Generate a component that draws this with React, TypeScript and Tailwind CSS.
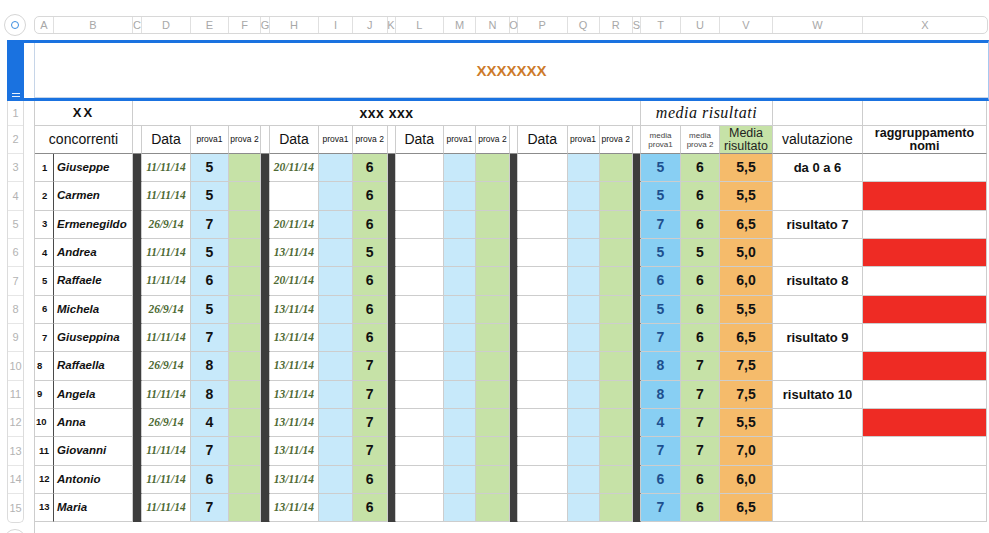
const COLS =
  "grid grid-cols-[19px_79px_9px_49px_38px_32px_9px_49px_34px_34.5px_8px_48.5px_32px_34px_8px_49.5px_32px_33.5px_8px_40px_39px_53px_90px_124px]";

const letters = "ABCDEFGHIJKLMNOPQRSTUVWX".split("");

type Row = {
  n: number;
  pl: string;
  name: string;
  d1: string;
  e: string;
  d2: string;
  j: string;
  t: string;
  u: string;
  v: string;
  w: string;
  red: boolean;
};

const rows: Row[] = [
  { n: 1, pl: "pl-[7px]", name: "Giuseppe", d1: "11/11/14", e: "5", d2: "20/11/14", j: "6", t: "5", u: "6", v: "5,5", w: "da 0 a 6", red: false },
  { n: 2, pl: "pl-[7px]", name: "Carmen", d1: "11/11/14", e: "5", d2: "", j: "6", t: "5", u: "6", v: "5,5", w: "", red: true },
  { n: 3, pl: "pl-[7px]", name: "Ermenegildo", d1: "26/9/14", e: "7", d2: "20/11/14", j: "6", t: "7", u: "6", v: "6,5", w: "risultato 7", red: false },
  { n: 4, pl: "pl-[7px]", name: "Andrea", d1: "11/11/14", e: "5", d2: "13/11/14", j: "5", t: "5", u: "5", v: "5,0", w: "", red: true },
  { n: 5, pl: "pl-[7px]", name: "Raffaele", d1: "11/11/14", e: "6", d2: "20/11/14", j: "6", t: "6", u: "6", v: "6,0", w: "risultato 8", red: false },
  { n: 6, pl: "pl-[7px]", name: "Michela", d1: "26/9/14", e: "5", d2: "13/11/14", j: "6", t: "5", u: "6", v: "5,5", w: "", red: true },
  { n: 7, pl: "pl-[7px]", name: "Giuseppina", d1: "11/11/14", e: "7", d2: "13/11/14", j: "6", t: "7", u: "6", v: "6,5", w: "risultato 9", red: false },
  { n: 8, pl: "pl-[2px]", name: "Raffaella", d1: "26/9/14", e: "8", d2: "13/11/14", j: "7", t: "8", u: "7", v: "7,5", w: "", red: true },
  { n: 9, pl: "pl-[2px]", name: "Angela", d1: "11/11/14", e: "8", d2: "13/11/14", j: "7", t: "8", u: "7", v: "7,5", w: "risultato 10", red: false },
  { n: 10, pl: "pl-[1px]", name: "Anna", d1: "26/9/14", e: "4", d2: "13/11/14", j: "7", t: "4", u: "7", v: "5,5", w: "", red: true },
  { n: 11, pl: "pl-[4px]", name: "Giovanni", d1: "11/11/14", e: "7", d2: "13/11/14", j: "7", t: "7", u: "7", v: "7,0", w: "", red: false },
  { n: 12, pl: "pl-[4px]", name: "Antonio", d1: "11/11/14", e: "6", d2: "13/11/14", j: "6", t: "6", u: "6", v: "6,0", w: "", red: false },
  { n: 13, pl: "pl-[4px]", name: "Maria", d1: "11/11/14", e: "7", d2: "13/11/14", j: "6", t: "7", u: "6", v: "6,5", w: "", red: false },
];

const line = "border-r border-b border-[#cdcdcd]";
const dark = "bg-[#3d3d3d] border-r border-b border-[#cdcdcd] border-b-[#3d3d3d]";
const score = "flex items-center justify-center text-[14px] font-bold";
const date =
  "flex items-center justify-center font-['Liberation_Serif',serif] italic font-bold text-[11.5px] text-[#4e6a34]";
const head = "border-r border-b border-[#cdcdcd] border-b-[#8c8c8c]";

function BodyRow({ r }: { r: Row }) {
  return (
    <div className={`${COLS} h-[28.33px]`}>
      <div className={`${line} border-r-[#4a4a4a] flex items-center ${r.pl} text-[9.5px] font-bold`}>{r.n}</div>
      <div className={`${line} flex items-center pl-[3px] text-[11.5px] font-bold italic`}>{r.name}</div>
      <div className={dark} />
      <div className={`${line} ${date}`}>{r.d1}</div>
      <div className={`${line} ${score} bg-[#c7e9fa]`}>{r.e}</div>
      <div className={`${line} bg-[#c6e2a7]`} />
      <div className={dark} />
      <div className={`${line} ${date}`}>{r.d2}</div>
      <div className={`${line} bg-[#c7e9fa]`} />
      <div className={`${line} ${score} bg-[#c6e2a7]`}>{r.j}</div>
      <div className={dark} />
      <div className={line} />
      <div className={`${line} bg-[#c7e9fa]`} />
      <div className={`${line} bg-[#c6e2a7]`} />
      <div className={dark} />
      <div className={line} />
      <div className={`${line} bg-[#c7e9fa]`} />
      <div className={`${line} bg-[#c6e2a7]`} />
      <div className={dark} />
      <div className={`${line} ${score} bg-[#88cff3] text-[#1d4f8f]`}>{r.t}</div>
      <div className={`${line} ${score} bg-[#c6e2a7]`}>{r.u}</div>
      <div className={`${line} ${score} bg-[#f5bb6b]`}>{r.v}</div>
      <div className={`${line} flex items-center justify-center text-[13px] font-bold`}>{r.w}</div>
      <div className={`${line} ${r.red ? "bg-[#ee2b24]" : ""}`} />
    </div>
  );
}

export default function App() {
  const gutterRows = [
    { label: "1", h: "h-[25px]" },
    { label: "2", h: "h-[28px]" },
    ...Array.from({ length: 13 }, (_, i) => ({ label: String(i + 3), h: "h-[28.33px]" })),
  ];

  return (
    <div className="w-[989px] h-[533px] overflow-hidden bg-white text-[#111] font-['Liberation_Sans',Arial,sans-serif]">
      {/* column letters */}
      <div className="flex items-center h-[16px] mt-[17px]">
        <div className="w-[34px] flex">
          <div className="ml-[4px] w-[22px] h-[22px] rounded-full border border-[#d6d6d6] flex items-center justify-center">
            <div className="w-[8px] h-[8px] rounded-full border border-[#3b8de0]" />
          </div>
        </div>
        <div className={`${COLS} box-content h-[16px] border border-[#d8d8d8] rounded-[5px]`}>
          {letters.map((l, i) => (
            <div
              key={l}
              className={`flex items-center justify-center text-[11px] leading-none text-[#a8a8a8] ${i < letters.length - 1 ? "border-r border-[#e0e0e0]" : ""}`}
            >
              {l}
            </div>
          ))}
        </div>
      </div>

      {/* title band */}
      <div className="flex h-[61px] mt-[7px] ml-[7px]">
        <div className="w-[17px] bg-[#1a72e0] flex flex-col justify-end items-center pb-[4px] gap-[2px]">
          <div className="w-[8px] h-px bg-white/90" />
          <div className="w-[8px] h-px bg-white/90" />
        </div>
        <div className="flex-1 flex border-t-[3px] border-b-[3px] border-[#1a72e0] border-r border-r-[#a6c8f0]">
          <div className="w-[10px]" />
          <div className="flex-1 flex items-center justify-center pt-[3px] border-l border-b border-[#c6d5e8] text-[15px] font-bold text-[#cd7b2b]">
            XXXXXXX
          </div>
        </div>
      </div>

      {/* body */}
      <div className="flex">
        <div className="w-[34px] flex flex-col">
          <div className="ml-[7px] w-[17px] border-x border-b border-[#dcdcdc] rounded-b-[5px] flex flex-col">
            {gutterRows.map((g, i) => (
              <div
                key={g.label}
                className={`${g.h} flex items-center justify-center text-[11px] text-[#b3b3b3] ${i < gutterRows.length - 1 ? "border-b border-[#e6e6e6]" : ""}`}
              >
                {g.label}
              </div>
            ))}
          </div>
          <div className="ml-[4px] mt-[6px] w-[22px] h-[22px] rounded-full border border-[#d6d6d6]" />
        </div>

        <div className="border-l border-[#cdcdcd]">
          {/* row 1 */}
          <div className={`${COLS} h-[25px]`}>
            <div className={`${line} col-span-2 flex items-center justify-center text-[13px] font-bold tracking-[2px]`}>XX</div>
            <div className={`${line} col-span-17 flex items-center justify-center text-[14px] font-bold tracking-[0.5px]`}>xxx xxx</div>
            <div className={`${line} col-span-3 flex items-center justify-center font-['Liberation_Serif',serif] italic text-[16px] tracking-[0.5px]`}>
              media risultati
            </div>
            <div className={line} />
            <div className={line} />
          </div>

          {/* row 2 */}
          <div className={`${COLS} h-[28px]`}>
            <div className={`${head} col-span-2 flex items-center justify-center text-[14px]`}>concorrenti</div>
            <div className={head} />
            {[0, 1, 2, 3].map((g) => (
              <div key={g} className="contents">
                <div className={`${head} flex items-center justify-center text-[14px]`}>Data</div>
                <div className={`${head} flex items-center justify-center text-[8.5px]`}>prova1</div>
                <div className={`${head} flex items-center justify-center text-[8.5px]`}>prova 2</div>
                <div className={head} />
              </div>
            ))}
            <div className={`${head} flex flex-col items-center justify-center text-[8px] leading-[9px] text-[#444]`}>
              <span>media</span>
              <span>prova1</span>
            </div>
            <div className={`${head} flex flex-col items-center justify-center text-[8px] leading-[9px] text-[#444]`}>
              <span>media</span>
              <span>prova 2</span>
            </div>
            <div className={`${head} bg-[#c6e2a7] flex flex-col items-center justify-center text-[12.5px] leading-[13px] text-[#222]`}>
              <span>Media</span>
              <span>risultato</span>
            </div>
            <div className={`${head} flex items-center justify-center text-[14px]`}>valutazione</div>
            <div className={`${head} flex flex-col items-center justify-center text-[12.5px] leading-[13px] font-bold`}>
              <span>raggruppamento</span>
              <span>nomi</span>
            </div>
          </div>

          {rows.map((r) => (
            <BodyRow key={r.n} r={r} />
          ))}
        </div>
      </div>
    </div>
  );
}
